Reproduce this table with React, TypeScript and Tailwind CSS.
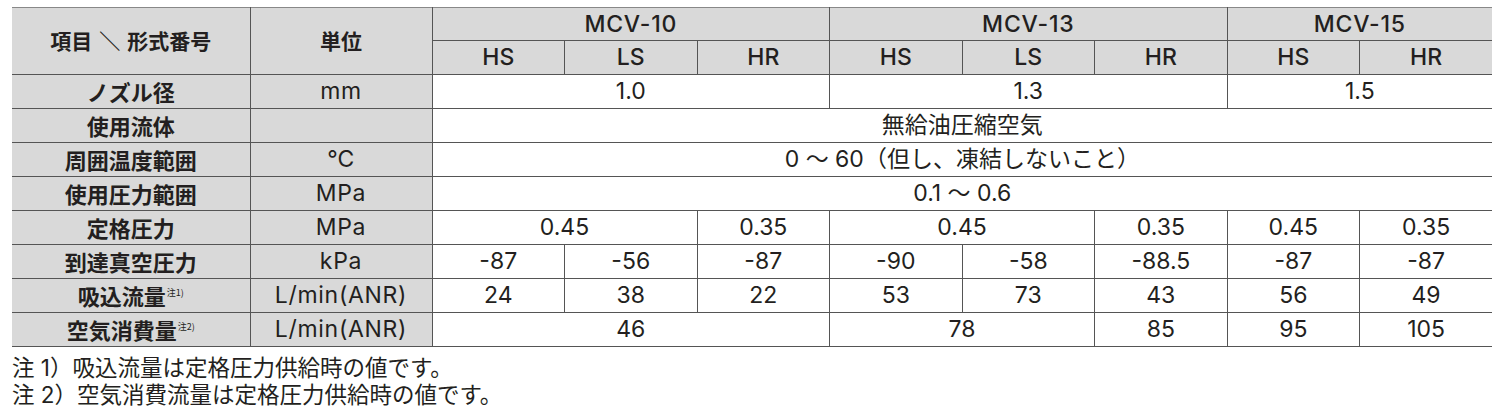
import React from 'react';

const base = "font-['Inter','Noto_Sans_CJK_JP',sans-serif]";
const jp = "font-['Noto_Sans_CJK_JP',sans-serif]";

// shared cell look
const cell = 'border border-[#555] first:border-l-0 last:border-r-0 text-center align-middle p-0 leading-none';
const grey = 'bg-[#d9d9d9]';

type Val = { v: string; span?: number };

const rows: { label: string; note?: string; unit: string; vals: Val[] }[] = [
  { label: 'ノズル径', unit: 'mm', vals: [{ v: '1.0', span: 3 }, { v: '1.3', span: 3 }, { v: '1.5', span: 2 }] },
  { label: '使用流体', unit: '', vals: [{ v: '無給油圧縮空気', span: 8 }] },
  { label: '周囲温度範囲', unit: '℃', vals: [{ v: '0 ～ 60（但し、凍結しないこと）', span: 8 }] },
  { label: '使用圧力範囲', unit: 'MPa', vals: [{ v: '0.1 ～ 0.6', span: 8 }] },
  {
    label: '定格圧力',
    unit: 'MPa',
    vals: [{ v: '0.45', span: 2 }, { v: '0.35' }, { v: '0.45', span: 2 }, { v: '0.35' }, { v: '0.45' }, { v: '0.35' }],
  },
  {
    label: '到達真空圧力',
    unit: 'kPa',
    vals: ['-87', '-56', '-87', '-90', '-58', '-88.5', '-87', '-87'].map((v) => ({ v })),
  },
  {
    label: '吸込流量',
    note: '注1)',
    unit: 'L/min(ANR)',
    vals: ['24', '38', '22', '53', '73', '43', '56', '49'].map((v) => ({ v })),
  },
  {
    label: '空気消費量',
    note: '注2)',
    unit: 'L/min(ANR)',
    vals: [{ v: '46', span: 3 }, { v: '78', span: 2 }, { v: '85' }, { v: '95' }, { v: '105' }],
  },
];

export default function App() {
  return (
    <div className={`bg-white w-[1500px] h-[414px] pt-[7px] pl-[12px] text-[#231f20] ${base}`}>
      <table className="table-fixed border-collapse w-[1480px]">
        <colgroup>
          <col className="w-[238px]" />
          <col className="w-[182px]" />
          {[1, 2, 3, 4, 5, 6, 7, 8].map((i) => (
            <col key={i} className="w-[132.5px]" />
          ))}
        </colgroup>
        <thead>
          <tr className="h-[33px]">
            <th rowSpan={2} className={`${cell} ${grey} ${jp} border-t-[#888] text-[21px] font-bold pb-[2px]`}>
              項目<span className="mx-[7px]">＼</span>形式番号
            </th>
            <th rowSpan={2} className={`${cell} ${grey} ${jp} border-t-[#888] text-[21px] font-bold pb-[2px]`}>
              単位
            </th>
            {['MCV-10', 'MCV-13', 'MCV-15'].map((m, i) => (
              <th
                key={m}
                colSpan={i === 2 ? 2 : 3}
                className={`${cell} ${grey} border-t-[#888] text-[23px] font-medium tracking-[0.8px]`}
              >
                {m}
              </th>
            ))}
          </tr>
          <tr className="h-[34px]">
            {['HS', 'LS', 'HR', 'HS', 'LS', 'HR', 'HS', 'HR'].map((h, i) => (
              <th key={i} className={`${cell} ${grey} text-[23px] font-medium`}>
                {h}
              </th>
            ))}
          </tr>
        </thead>
        <tbody>
          {rows.map((r) => (
            <tr key={r.label} className="h-[34px]">
              <td className={`${cell} ${grey} ${jp} text-[22px] font-bold pb-[2px]`}>
                {r.label}
                {r.note && <span className="relative -top-[9px] text-[9px] font-normal ml-[1px]">{r.note}</span>}
              </td>
              <td className={`${cell} ${grey} text-[23px] tracking-[0.7px]`}>{r.unit}</td>
              {r.vals.map((c, i) => (
                <td key={i} colSpan={c.span ?? 1} className={`${cell} text-[23px]`}>
                  {c.v}
                </td>
              ))}
            </tr>
          ))}
        </tbody>
      </table>
      <div className="mt-[7px] text-[22.5px] leading-[27px]">
        <p>注 1）吸込流量は定格圧力供給時の値です。</p>
        <p>注 2）空気消費流量は定格圧力供給時の値です。</p>
      </div>
    </div>
  );
}
